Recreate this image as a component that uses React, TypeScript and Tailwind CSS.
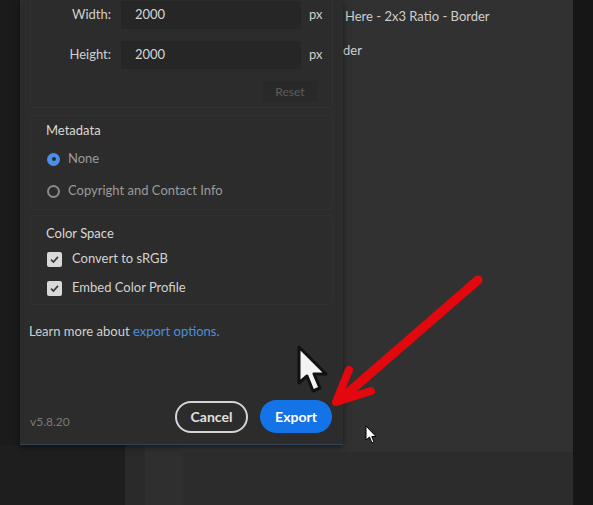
import React from 'react';

const font = { fontFamily: 'Lato, "Open Sans", "Noto Sans", sans-serif' };

function Radio({ checked, label }: { checked?: boolean; label: string }) {
    return (
        <div className="flex items-center gap-[8px] h-[20px]">
            {checked ? (
                <span className="w-[13px] h-[13px] rounded-full bg-[#4b8fe8] flex items-center justify-center">
                    <span className="w-[4px] h-[4px] rounded-full bg-[#2c2c2c]" />
                </span>
            ) : (
                <span className="w-[13px] h-[13px] rounded-full border-2 border-[#8a8a8a]" />
            )}
            <span className="text-[13px] text-[#9b9b9b]">{label}</span>
        </div>
    );
}

function Check({ label }: { label: string }) {
    return (
        <div className="flex items-center gap-[10px] h-[16px]">
            <span className="w-[15px] h-[15px] rounded-[2px] bg-[#d9d9d9] flex items-center justify-center">
                <svg width="11" height="11" viewBox="0 0 12 12">
                    <path d="M2.2 6.2 L4.8 8.8 L9.8 3.2" fill="none" stroke="#3a3a3a" strokeWidth="1.9" />
                </svg>
            </span>
            <span className="text-[13px] text-[#d2d2d2]">{label}</span>
        </div>
    );
}

function SizeRow({ label, value }: { label: string; value: string }) {
    return (
        <div className="flex items-center h-[28px]">
            <span className="w-[80px] text-right text-[13px] text-[#d0d0d0]">{label}</span>
            <div className="ml-[10px] w-[180px] h-[28px] bg-[#262626] flex items-center pl-[14px] text-[13px] text-[#d6d6d6]">
                {value}
            </div>
            <span className="ml-[8px] text-[13px] text-[#cfcfcf]">px</span>
        </div>
    );
}

export default function App() {
    return (
        <div className="relative w-[593px] h-[505px] overflow-hidden bg-[#2c2c2c]" style={font}>
            {/* background app */}
            <div className="flex w-full h-full">
                <div className="w-[125px] flex flex-col">
                    <div className="h-[445px] bg-[#1b1b1b]" />
                    <div className="flex-1 bg-[#1e1e1e]" />
                </div>
                <div className="w-[20px] bg-[#2a2a2a]" />
                <div className="w-[38px] bg-[#2f2f2f]" />
                <div className="flex-1 flex flex-col">
                    <div className="h-[452px] bg-[#313131] pt-[6px]">
                        <div className="pl-[162px] text-[13px] text-[#cfcfcf] leading-[20px] whitespace-nowrap">Here - 2x3 Ratio - Border</div>
                        <div className="pl-[160px] mt-[14px] text-[13px] text-[#cfcfcf] leading-[20px]">der</div>
                    </div>
                    <div className="flex-1 bg-[#2c2c2c]" />
                </div>
                <div className="w-[20px] bg-[#161616]" />
            </div>

            {/* export dialog */}
            <div className="absolute left-[20px] top-0 w-[323px] h-[445px] bg-[#2c2c2c] border-b border-[#2f4457] shadow-[0_2px_6px_rgba(0,0,0,0.5)] flex flex-col">
                <div className="mx-[10px] -mt-[10px] h-[118px] border border-[#323232] rounded-[3px] pt-[10px] flex flex-col">
                    <SizeRow label="Width:" value="2000" />
                    <div className="mt-[12px]"><SizeRow label="Height:" value="2000" /></div>
                    <div className="mt-[12px] ml-[232px] w-[54px] h-[21px] bg-[#292929] flex items-center justify-center text-[12px] text-[#5c5c5c]">
                        Reset
                    </div>
                </div>

                <div className="mx-[10px] mt-[7px] h-[95px] border border-[#313131] rounded-[3px] pl-[15px] pt-[5px]">
                    <div className="text-[13px] text-[#d8d8d8] leading-[18px]">Metadata</div>
                    <div className="mt-[10px] pl-[1px]"><Radio checked label="None" /></div>
                    <div className="mt-[12px] pl-[1px]"><Radio label="Copyright and Contact Info" /></div>
                </div>

                <div className="mx-[10px] mt-[5px] h-[90px] border border-[#313131] rounded-[3px] pl-[15px] pt-[8px]">
                    <div className="text-[13px] text-[#d8d8d8] leading-[18px]">Color Space</div>
                    <div className="mt-[9px] pl-[1px]"><Check label="Convert to sRGB" /></div>
                    <div className="mt-[13px] pl-[1px]"><Check label="Embed Color Profile" /></div>
                </div>

                <div className="mt-[17px] pl-[9px] text-[13px] text-[#d0d0d0] leading-[18px]">
                    Learn more about <span className="text-[#4a8fdc]">export options.</span>
                </div>

                <div className="mt-auto mb-[11px] flex items-center pl-[10px] pr-[11px]">
                    <span className="mt-[10px] text-[12px] text-[#7a7a7a]">v5.8.20</span>
                    <div className="ml-auto flex items-center gap-[12px]">
                        <button className="w-[73px] h-[32px] rounded-full border-2 border-[#d4d4d4] text-[14px] font-bold text-[#e0e0e0]">
                            Cancel
                        </button>
                        <button className="w-[72px] h-[33px] rounded-full bg-[#1473e6] text-[14px] font-bold text-white">
                            Export
                        </button>
                    </div>
                </div>
            </div>

            {/* big mouse cursor */}
            <svg className="absolute left-[296px] top-[345px]" width="38" height="50" viewBox="0 0 38 50">
                <path d="M3 2 L3 38 L11 31 L17 46 L24 43 L18 29 L30 29 Z" fill="#f4f4f4" stroke="#111" strokeWidth="3" strokeLinejoin="round" />
            </svg>

            {/* small cursor */}
            <svg className="absolute left-[365px] top-[425px]" width="14" height="20" viewBox="0 0 14 20">
                <path d="M1 1 L1 15 L4.5 12 L7 18 L9 17 L6.8 11.5 L11 11.5 Z" fill="#fff" stroke="#000" strokeWidth="1" />
            </svg>

            {/* red arrow */}
            <svg className="absolute left-0 top-0 pointer-events-none" width="593" height="505" viewBox="0 0 593 505">
                <path d="M478 280 L342 398" stroke="#e3080d" strokeWidth="9" strokeLinecap="round" fill="none" />
                <path d="M349 370 L336 402 L371 391" stroke="#e3080d" strokeWidth="8" strokeLinecap="round" strokeLinejoin="round" fill="none" />
            </svg>
        </div>
    );
}
